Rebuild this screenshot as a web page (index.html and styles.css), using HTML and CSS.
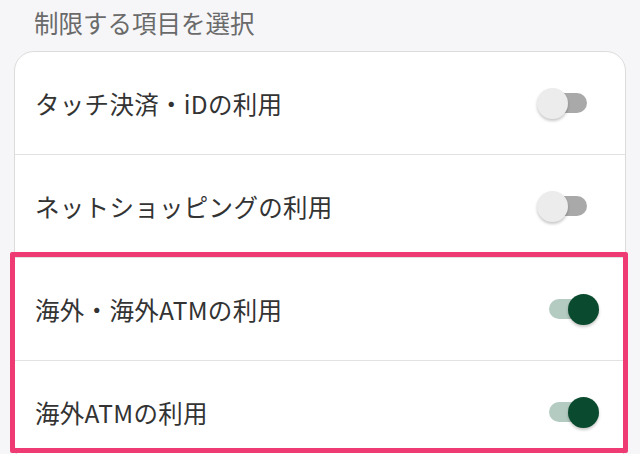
FILE: index.html
```html
<!DOCTYPE html>
<html lang="ja">
<head>
<meta charset="utf-8">
<link rel="stylesheet" href="styles.css">
</head>
<body>
<div class="page">
  <h2 class="title">制限する項目を選択</h2>
  <div class="card">
    <div class="row">
      <span class="label">タッチ決済・iDの利用</span>
      <span class="toggle"><span class="track"></span><span class="knob"></span></span>
    </div>
    <div class="row">
      <span class="label">ネットショッピングの利用</span>
      <span class="toggle"><span class="track"></span><span class="knob"></span></span>
    </div>
    <div class="group">
      <div class="row">
        <span class="label">海外・海外ATMの利用</span>
        <span class="toggle on"><span class="track"></span><span class="knob"></span></span>
      </div>
      <div class="row">
        <span class="label">海外ATMの利用</span>
        <span class="toggle on"><span class="track"></span><span class="knob"></span></span>
      </div>
    </div>
  </div>
</div>
</body>
</html>
```

FILE: styles.css
```css
html, body {
  margin: 0;
  padding: 0;
  background: #f6f6f8;
  font-family: "Noto Sans CJK JP", "Noto Sans", sans-serif;
}
.page {
  width: 640px;
  height: 454px;
  overflow: hidden;
}
.title {
  margin: 0;
  padding-left: 34px;
  font-size: 24.5px;
  font-weight: 400;
  line-height: 45px;
  color: #6a6a6a;
}
.card {
  margin: 6px 0 0 14px;
  width: 612px;
  box-sizing: border-box;
  background: #fff;
  border: 1px solid #dcdcdc;
  border-radius: 20px;
}
.row {
  height: 103px;
  box-sizing: border-box;
  border-bottom: 1px solid #e2e2e2;
  display: flex;
  align-items: center;
  justify-content: space-between;
  padding: 0 26px 0 20px;
}
.label {
  font-size: 24.5px;
  color: #333;
  letter-spacing: 0.3px;
}
.group {
  position: relative;
}
.group::after {
  content: "";
  position: absolute;
  left: -5px;
  right: -3px;
  top: -6px;
  bottom: 11px;
  border: 5px solid #ee3b74;
  border-radius: 2px;
  pointer-events: none;
}
.toggle {
  position: relative;
  width: 62px;
  height: 31px;
  flex: none;
}
.track {
  position: absolute;
  left: 12px;
  right: 12px;
  top: 5.5px;
  height: 20px;
  border-radius: 10px;
  background: #a9a9a9;
}
.knob {
  position: absolute;
  left: 0;
  top: 0;
  width: 31px;
  height: 31px;
  border-radius: 50%;
  background: #ececec;
  box-shadow: 0 2px 3px rgba(0,0,0,0.22);
}
.toggle.on .track {
  background: #b4cbc2;
}
.toggle.on .knob {
  left: 31px;
  background: #0a4a2e;
}
```
